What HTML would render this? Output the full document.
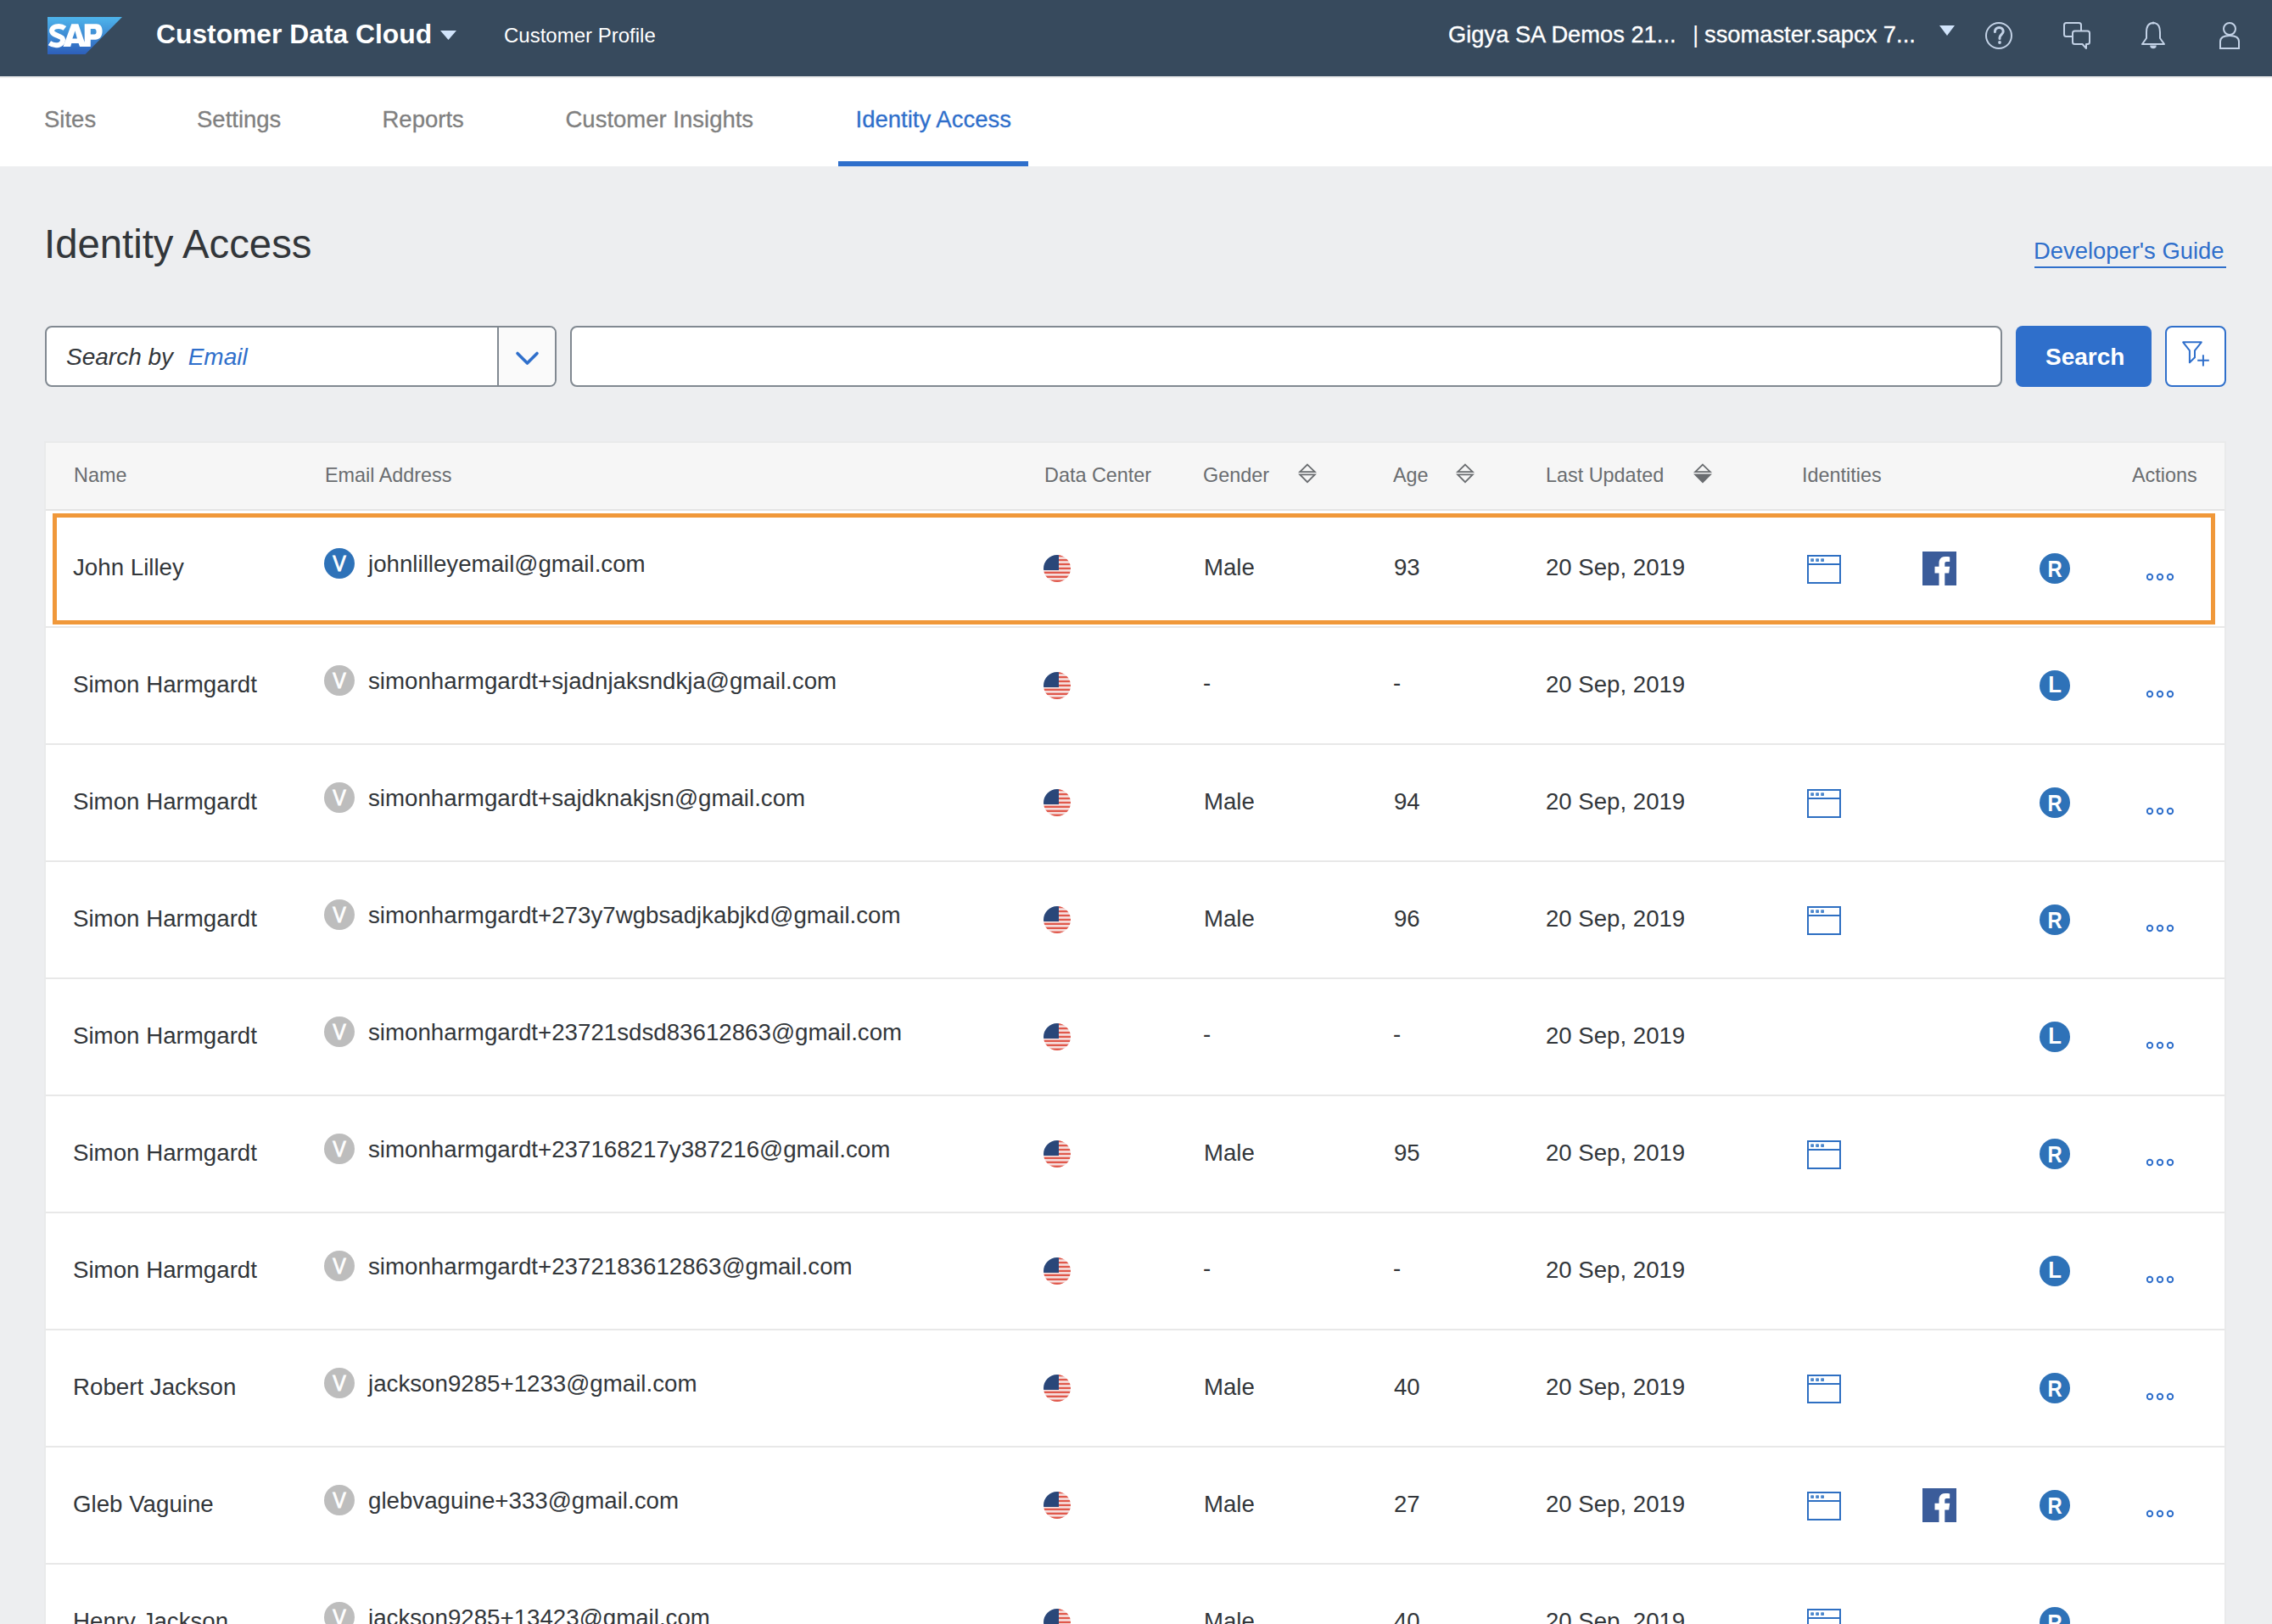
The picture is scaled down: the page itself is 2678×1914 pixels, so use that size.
<!DOCTYPE html>
<html><head><meta charset="utf-8">
<style>
*{box-sizing:border-box;margin:0;padding:0}
html,body{width:2678px;height:1914px;overflow:hidden;background:#edeef0;font-family:"Liberation Sans",sans-serif;color:#32363a}
.a{position:absolute;white-space:nowrap;line-height:1}
.tab{font-size:27.5px;color:#808080;top:126.5px;-webkit-text-stroke:0.3px currentColor}
.th{font-size:23.4px;color:#6a6d70;top:548.7px}
.td{font-size:27.6px;color:#32363a}
</style></head><body>

<div class="a" style="left:0;top:0;width:2678px;height:90px;background:#374a5d"></div>
<div class="a" style="left:0;top:90px;width:2678px;height:106px;background:#fff"></div>
<div class="a" style="left:0;top:91px;width:2678px;height:1px;background:#e8e8e8"></div>
<svg class="a" style="left:56px;top:20px" width="88" height="44" viewBox="0 0 88 44">
<defs><linearGradient id="lg" x1="0" y1="0" x2="0" y2="1"><stop offset="0" stop-color="#4eb5ec"/><stop offset="1" stop-color="#2d5fba"/></linearGradient></defs>
<polygon points="0,0 88,0 44.5,44 0,44" fill="url(#lg)"/>
<path transform="translate(-0.6,0.8)" d="M21 12.6 C17.5 10 13.5 9.8 10.5 10.6 C6.2 11.7 4.6 15 6.6 17.8 C8.6 20.4 14 21.3 17.3 23.6 C19.8 25.6 18.6 30.8 14 32 C10 33 6 32 3 30" fill="none" stroke="#fff" stroke-width="6"/>
<path fill="#fff" fill-rule="evenodd" d="M18.4 35 L28.3 8.2 L57.8 8.2 C62 8.2 64.6 11 64.6 16.6 C64.6 23.5 61 26.7 56.5 26.7 L50.8 26.7 L50.8 35 L38 35 L36.6 31.1 L28.3 31.1 L27.2 35 Z M29.4 25.4 L32.5 16.3 L34.9 25.4 Z M36.3 8.2 L43.7 8.2 L43.7 29.8 Z M50.8 13.9 L55.2 13.9 C56.8 13.9 57.6 15.2 57.6 17.2 C57.6 19.3 56.8 20.5 55.2 20.5 L50.8 20.5 Z"/>
</svg>
<div class="a" style="left:184px;top:25px;font-size:31.8px;font-weight:700;color:#fff">Customer Data Cloud</div>
<svg class="a" style="left:519px;top:36px" width="19" height="11"><polygon points="0,0 19,0 9.5,11" fill="#d1e4fb"/></svg>
<div class="a" style="left:594px;top:30px;font-size:24px;color:#fff">Customer Profile</div>
<div class="a" style="left:1707px;top:27px;font-size:27.3px;color:#fff;-webkit-text-stroke:0.35px #fff">Gigya SA Demos 21...</div>
<div class="a" style="left:1995px;top:27px;font-size:28px;color:#fff">|</div>
<div class="a" style="left:2009px;top:27px;font-size:27.3px;color:#fff;-webkit-text-stroke:0.35px #fff">ssomaster.sapcx 7...</div>
<svg class="a" style="left:2286px;top:30px" width="18" height="12"><polygon points="0,0 18,0 9,12" fill="#d1e4fb"/></svg>
<svg class="a" style="left:2338px;top:24px" width="36" height="36" viewBox="0 0 36 36"><circle cx="18" cy="18" r="15" fill="none" stroke="#c3d2e6" stroke-width="2"/><path d="M13.4 13.6 C13.4 10.4 15.6 8.4 18.4 8.4 C21.4 8.4 23.2 10.4 23.2 13 C23.2 16.4 19 17 19 20.6 V21.6" fill="none" stroke="#c3d2e6" stroke-width="3" stroke-linecap="round"/><circle cx="19" cy="26" r="1.9" fill="#c3d2e6"/></svg>
<svg class="a" style="left:2430px;top:24px" width="36" height="36" viewBox="0 0 36 36"><path d="M13 19 H5.5 Q3 19 3 16.5 V5.5 Q3 3 5.5 3 H20.5 Q23 3 23 5.5 V12.5" fill="none" stroke="#c3d2e6" stroke-width="2"/><path d="M15.5 12.5 H30.5 Q33 12.5 33 15 V25.5 Q33 28 30.5 28 H29 V33 L24.5 28 H15.5 Q13 28 13 25.5 V15 Q13 12.5 15.5 12.5 Z" fill="none" stroke="#c3d2e6" stroke-width="2" stroke-linejoin="round"/></svg>
<svg class="a" style="left:2520px;top:24px" width="36" height="36" viewBox="0 0 36 36"><path d="M18 3 C12 3 10 8 10 14 V21 L5 28 H31 L26 21 V14 C26 8 24 3 18 3 Z" fill="none" stroke="#c3d2e6" stroke-width="2" stroke-linejoin="round"/><path d="M14.2 29.5 A3.8 3.8 0 0 0 21.8 29.5 Z" fill="#c3d2e6"/><circle cx="18" cy="3" r="1.6" fill="#c3d2e6"/></svg>
<svg class="a" style="left:2610px;top:24px" width="36" height="36" viewBox="0 0 36 36"><circle cx="18" cy="10" r="7" fill="none" stroke="#c3d2e6" stroke-width="2"/><path d="M7 33 V25 C7 20 11 18 18 18 C25 18 29 20 29 25 V33 Z" fill="none" stroke="#c3d2e6" stroke-width="2"/></svg>
<div class="a tab" style="left:52px">Sites</div>
<div class="a tab" style="left:232px">Settings</div>
<div class="a tab" style="left:450.5px">Reports</div>
<div class="a tab" style="left:666.5px">Customer Insights</div>
<div class="a tab" style="left:1008.5px;color:#2f6fcb">Identity Access</div>
<div class="a" style="left:988px;top:190px;width:224px;height:6px;background:#2f6fcb"></div>
<div class="a" style="left:52px;top:263.8px;font-size:47.3px;color:#32363a">Identity Access</div>
<div class="a" style="left:2397px;top:281.5px;font-size:27.4px;color:#2f6fcb">Developer's Guide</div>
<div class="a" style="left:2398px;top:314px;width:226px;height:2px;background:#2f6fcb"></div>
<div class="a" style="left:53px;top:384px;width:603px;height:72px;background:#fff;border:2px solid #818991;border-radius:8px;overflow:hidden"><div class="a" style="left:531px;top:0;width:70px;height:68px;background:#fafafa;border-left:2px solid #818991"></div></div>
<svg class="a" style="left:604px;top:410px" width="34" height="24" viewBox="0 0 34 24"><polyline points="6,6.5 17.5,18 29,6.5" fill="none" stroke="#2f6fcb" stroke-width="3.6" stroke-linecap="round" stroke-linejoin="round"/></svg>
<div class="a" style="left:78px;top:407px;font-size:28px;font-style:italic;color:#32363a">Search by&nbsp;&nbsp;<span style="color:#2f6fcb;margin-left:2px">Email</span></div>
<div class="a" style="left:672px;top:384px;width:1688px;height:72px;background:#fff;border:2px solid #818991;border-radius:8px"></div>
<div class="a" style="left:2376px;top:384px;width:160px;height:72px;background:#2f6fcb;border-radius:8px"></div>
<div class="a" style="left:2411px;top:407px;font-size:28px;font-weight:700;color:#fff">Search</div>
<div class="a" style="left:2552px;top:384px;width:72px;height:72px;background:#fff;border:2px solid #2f6fcb;border-radius:8px"></div>
<svg class="a" style="left:2566px;top:396px" width="44" height="44" viewBox="0 0 44 44"><path d="M7.2 7.3 H28.8 L21 17.2 V25.3 L14.9 31.2 V17.2 Z" fill="none" stroke="#2f6fcb" stroke-width="2" stroke-linejoin="round"/><path d="M24.2 28.8 H37.8 M30.9 22.3 V35.6" stroke="#2f6fcb" stroke-width="2"/></svg>
<div class="a" style="left:52px;top:520px;width:2572px;height:1400px;background:#e9eaeb"></div>
<div class="a" style="left:54px;top:522px;width:2568px;height:1392px;background:#fff"></div>
<div class="a" style="left:54px;top:522px;width:2568px;height:78px;background:#f6f6f6"></div>
<div class="a" style="left:54px;top:600px;width:2568px;height:2px;background:#e4e4e4"></div>
<div class="a th" style="left:87px">Name</div>
<div class="a th" style="left:383px">Email Address</div>
<div class="a th" style="left:1231px">Data Center</div>
<div class="a th" style="left:1418px">Gender</div>
<div class="a th" style="left:1642px">Age</div>
<div class="a th" style="left:1822px">Last Updated</div>
<div class="a th" style="left:2124px">Identities</div>
<div class="a th" style="left:2513px">Actions</div>
<svg class="a" style="left:1530px;top:545px" width="22" height="26" viewBox="0 0 22 26"><polygon points="11,2.6 19.8,11.2 2.2,11.2" fill="none" stroke="#6a6d70" stroke-width="1.8" stroke-linejoin="miter"/><polygon points="2.2,14.4 19.8,14.4 11,23.2" fill="none" stroke="#6a6d70" stroke-width="1.8"/></svg>
<svg class="a" style="left:1716px;top:545px" width="22" height="26" viewBox="0 0 22 26"><polygon points="11,2.6 19.8,11.2 2.2,11.2" fill="none" stroke="#6a6d70" stroke-width="1.8" stroke-linejoin="miter"/><polygon points="2.2,14.4 19.8,14.4 11,23.2" fill="none" stroke="#6a6d70" stroke-width="1.8"/></svg>
<svg class="a" style="left:1996px;top:545px" width="22" height="26" viewBox="0 0 22 26"><polygon points="11,2.6 19.8,11.2 2.2,11.2" fill="none" stroke="#6a6d70" stroke-width="1.8" stroke-linejoin="miter"/><polygon points="2.2,14.4 19.8,14.4 11,23.2" fill="#6a6d70" stroke="#6a6d70" stroke-width="1.8"/></svg>
<div class="a" style="left:54px;top:738px;width:2568px;height:2px;background:#e8e8e8"></div>
<div class="a td" style="left:86px;top:655.3px;font-size:27.7px">John Lilley</div>
<svg class="a" style="left:382px;top:646px" width="36" height="36" viewBox="0 0 36 36"><circle cx="18" cy="18" r="18" fill="#2e72b8"/><text x="0" y="0" transform="translate(18,27.4) scale(0.93,1)" text-anchor="middle" font-family="Liberation Sans" font-weight="400" font-size="25" fill="#fff" stroke="#fff" stroke-width="0.9">V</text></svg>
<div class="a td" style="left:434px;top:651px;font-size:27.7px">johnlilleyemail@gmail.com</div>
<svg class="a" style="left:1230px;top:654px" width="32" height="32" viewBox="0 0 32 32"><defs><clipPath id="fc670"><circle cx="16" cy="16" r="16"/></clipPath><filter id="fb670" x="-10%" y="-10%" width="120%" height="120%"><feGaussianBlur stdDeviation="0.55"/></filter></defs><g clip-path="url(#fc670)"><g filter="url(#fb670)"><rect x="0" y="0.00" width="32" height="2.76" fill="#e0584c"/><rect x="0" y="2.46" width="32" height="2.76" fill="#f6e2e1"/><rect x="0" y="4.92" width="32" height="2.76" fill="#e0584c"/><rect x="0" y="7.38" width="32" height="2.76" fill="#f6e2e1"/><rect x="0" y="9.85" width="32" height="2.76" fill="#e0584c"/><rect x="0" y="12.31" width="32" height="2.76" fill="#f6e2e1"/><rect x="0" y="14.77" width="32" height="2.76" fill="#e0584c"/><rect x="0" y="17.23" width="32" height="2.76" fill="#f6e2e1"/><rect x="0" y="19.69" width="32" height="2.76" fill="#e0584c"/><rect x="0" y="22.15" width="32" height="2.76" fill="#f6e2e1"/><rect x="0" y="24.62" width="32" height="2.76" fill="#e0584c"/><rect x="0" y="27.08" width="32" height="2.76" fill="#f6e2e1"/><rect x="0" y="29.54" width="32" height="2.76" fill="#e0584c"/><rect x="-2" y="-2" width="20" height="20" fill="#2b4679"/></g></g></svg>
<div class="a td" style="left:1419px;top:655.3px">Male</div>
<div class="a td" style="left:1643px;top:655.3px">93</div>
<div class="a td" style="left:1822px;top:655.3px">20 Sep, 2019</div>
<svg class="a" style="left:2130px;top:654px" width="40" height="34" viewBox="0 0 40 34"><rect x="1" y="1" width="38" height="32" fill="none" stroke="#2e6fc2" stroke-width="2"/><rect x="1" y="10" width="38" height="2" fill="#2e6fc2"/><rect x="4.2" y="4.2" width="3.8" height="3.8" rx="0.8" fill="#4a86cc"/><rect x="10.2" y="4.2" width="3.8" height="3.8" rx="0.8" fill="#4a86cc"/><rect x="16.2" y="4.2" width="3.8" height="3.8" rx="0.8" fill="#4a86cc"/></svg>
<svg class="a" style="left:2266px;top:650px" width="40" height="40" viewBox="0 0 40 40"><rect width="40" height="40" fill="#3b5c9a"/><path d="M19.5 40 V25.5 H14.5 V17.8 H19.5 V13.5 C19.5 8.5 22.3 6 27 6 C29 6 31.3 6.2 32.2 6.4 V12 H28.5 C26.5 12 26.3 13 26.3 14.5 V17.8 H32.2 L31.2 25.5 H26.3 V40 Z" fill="#fff"/></svg>
<svg class="a" style="left:2404px;top:652px" width="36" height="36" viewBox="0 0 36 36"><circle cx="18" cy="18" r="18" fill="#2e72b8"/><text x="0" y="0" transform="translate(18,28) scale(0.88,1)" text-anchor="middle" font-family="Liberation Sans" font-weight="700" font-size="27" fill="#fff">R</text></svg>
<svg class="a" style="left:2530px;top:672px" width="34" height="16" viewBox="0 0 34 16"><circle cx="4" cy="8" r="3.2" fill="none" stroke="#2f6fcb" stroke-width="2"/><circle cx="16" cy="8" r="3.2" fill="none" stroke="#2f6fcb" stroke-width="2"/><circle cx="28" cy="8" r="3.2" fill="none" stroke="#2f6fcb" stroke-width="2"/></svg>
<div class="a" style="left:54px;top:876px;width:2568px;height:2px;background:#e8e8e8"></div>
<div class="a td" style="left:86px;top:793.3px;font-size:27.7px">Simon Harmgardt</div>
<svg class="a" style="left:382px;top:784px" width="36" height="36" viewBox="0 0 36 36"><circle cx="18" cy="18" r="18" fill="#bdbdbd"/><text x="0" y="0" transform="translate(18,27.4) scale(0.93,1)" text-anchor="middle" font-family="Liberation Sans" font-weight="400" font-size="25" fill="#fff" stroke="#fff" stroke-width="0.9">V</text></svg>
<div class="a td" style="left:434px;top:789px;font-size:27.7px">simonharmgardt+sjadnjaksndkja@gmail.com</div>
<svg class="a" style="left:1230px;top:792px" width="32" height="32" viewBox="0 0 32 32"><defs><clipPath id="fc808"><circle cx="16" cy="16" r="16"/></clipPath><filter id="fb808" x="-10%" y="-10%" width="120%" height="120%"><feGaussianBlur stdDeviation="0.55"/></filter></defs><g clip-path="url(#fc808)"><g filter="url(#fb808)"><rect x="0" y="0.00" width="32" height="2.76" fill="#e0584c"/><rect x="0" y="2.46" width="32" height="2.76" fill="#f6e2e1"/><rect x="0" y="4.92" width="32" height="2.76" fill="#e0584c"/><rect x="0" y="7.38" width="32" height="2.76" fill="#f6e2e1"/><rect x="0" y="9.85" width="32" height="2.76" fill="#e0584c"/><rect x="0" y="12.31" width="32" height="2.76" fill="#f6e2e1"/><rect x="0" y="14.77" width="32" height="2.76" fill="#e0584c"/><rect x="0" y="17.23" width="32" height="2.76" fill="#f6e2e1"/><rect x="0" y="19.69" width="32" height="2.76" fill="#e0584c"/><rect x="0" y="22.15" width="32" height="2.76" fill="#f6e2e1"/><rect x="0" y="24.62" width="32" height="2.76" fill="#e0584c"/><rect x="0" y="27.08" width="32" height="2.76" fill="#f6e2e1"/><rect x="0" y="29.54" width="32" height="2.76" fill="#e0584c"/><rect x="-2" y="-2" width="20" height="20" fill="#2b4679"/></g></g></svg>
<div class="a td" style="left:1418px;top:791.3px">-</div>
<div class="a td" style="left:1642px;top:791.3px">-</div>
<div class="a td" style="left:1822px;top:793.3px">20 Sep, 2019</div>
<svg class="a" style="left:2404px;top:790px" width="36" height="36" viewBox="0 0 36 36"><circle cx="18" cy="18" r="18" fill="#2e72b8"/><text x="0" y="0" transform="translate(18,26.3) scale(0.95,1)" text-anchor="middle" font-family="Liberation Sans" font-weight="700" font-size="27" fill="#fff">L</text></svg>
<svg class="a" style="left:2530px;top:810px" width="34" height="16" viewBox="0 0 34 16"><circle cx="4" cy="8" r="3.2" fill="none" stroke="#2f6fcb" stroke-width="2"/><circle cx="16" cy="8" r="3.2" fill="none" stroke="#2f6fcb" stroke-width="2"/><circle cx="28" cy="8" r="3.2" fill="none" stroke="#2f6fcb" stroke-width="2"/></svg>
<div class="a" style="left:54px;top:1014px;width:2568px;height:2px;background:#e8e8e8"></div>
<div class="a td" style="left:86px;top:931.3px;font-size:27.7px">Simon Harmgardt</div>
<svg class="a" style="left:382px;top:922px" width="36" height="36" viewBox="0 0 36 36"><circle cx="18" cy="18" r="18" fill="#bdbdbd"/><text x="0" y="0" transform="translate(18,27.4) scale(0.93,1)" text-anchor="middle" font-family="Liberation Sans" font-weight="400" font-size="25" fill="#fff" stroke="#fff" stroke-width="0.9">V</text></svg>
<div class="a td" style="left:434px;top:927px;font-size:27.7px">simonharmgardt+sajdknakjsn@gmail.com</div>
<svg class="a" style="left:1230px;top:930px" width="32" height="32" viewBox="0 0 32 32"><defs><clipPath id="fc946"><circle cx="16" cy="16" r="16"/></clipPath><filter id="fb946" x="-10%" y="-10%" width="120%" height="120%"><feGaussianBlur stdDeviation="0.55"/></filter></defs><g clip-path="url(#fc946)"><g filter="url(#fb946)"><rect x="0" y="0.00" width="32" height="2.76" fill="#e0584c"/><rect x="0" y="2.46" width="32" height="2.76" fill="#f6e2e1"/><rect x="0" y="4.92" width="32" height="2.76" fill="#e0584c"/><rect x="0" y="7.38" width="32" height="2.76" fill="#f6e2e1"/><rect x="0" y="9.85" width="32" height="2.76" fill="#e0584c"/><rect x="0" y="12.31" width="32" height="2.76" fill="#f6e2e1"/><rect x="0" y="14.77" width="32" height="2.76" fill="#e0584c"/><rect x="0" y="17.23" width="32" height="2.76" fill="#f6e2e1"/><rect x="0" y="19.69" width="32" height="2.76" fill="#e0584c"/><rect x="0" y="22.15" width="32" height="2.76" fill="#f6e2e1"/><rect x="0" y="24.62" width="32" height="2.76" fill="#e0584c"/><rect x="0" y="27.08" width="32" height="2.76" fill="#f6e2e1"/><rect x="0" y="29.54" width="32" height="2.76" fill="#e0584c"/><rect x="-2" y="-2" width="20" height="20" fill="#2b4679"/></g></g></svg>
<div class="a td" style="left:1419px;top:931.3px">Male</div>
<div class="a td" style="left:1643px;top:931.3px">94</div>
<div class="a td" style="left:1822px;top:931.3px">20 Sep, 2019</div>
<svg class="a" style="left:2130px;top:930px" width="40" height="34" viewBox="0 0 40 34"><rect x="1" y="1" width="38" height="32" fill="none" stroke="#2e6fc2" stroke-width="2"/><rect x="1" y="10" width="38" height="2" fill="#2e6fc2"/><rect x="4.2" y="4.2" width="3.8" height="3.8" rx="0.8" fill="#4a86cc"/><rect x="10.2" y="4.2" width="3.8" height="3.8" rx="0.8" fill="#4a86cc"/><rect x="16.2" y="4.2" width="3.8" height="3.8" rx="0.8" fill="#4a86cc"/></svg>
<svg class="a" style="left:2404px;top:928px" width="36" height="36" viewBox="0 0 36 36"><circle cx="18" cy="18" r="18" fill="#2e72b8"/><text x="0" y="0" transform="translate(18,28) scale(0.88,1)" text-anchor="middle" font-family="Liberation Sans" font-weight="700" font-size="27" fill="#fff">R</text></svg>
<svg class="a" style="left:2530px;top:948px" width="34" height="16" viewBox="0 0 34 16"><circle cx="4" cy="8" r="3.2" fill="none" stroke="#2f6fcb" stroke-width="2"/><circle cx="16" cy="8" r="3.2" fill="none" stroke="#2f6fcb" stroke-width="2"/><circle cx="28" cy="8" r="3.2" fill="none" stroke="#2f6fcb" stroke-width="2"/></svg>
<div class="a" style="left:54px;top:1152px;width:2568px;height:2px;background:#e8e8e8"></div>
<div class="a td" style="left:86px;top:1069.3px;font-size:27.7px">Simon Harmgardt</div>
<svg class="a" style="left:382px;top:1060px" width="36" height="36" viewBox="0 0 36 36"><circle cx="18" cy="18" r="18" fill="#bdbdbd"/><text x="0" y="0" transform="translate(18,27.4) scale(0.93,1)" text-anchor="middle" font-family="Liberation Sans" font-weight="400" font-size="25" fill="#fff" stroke="#fff" stroke-width="0.9">V</text></svg>
<div class="a td" style="left:434px;top:1065px;font-size:27.7px">simonharmgardt+273y7wgbsadjkabjkd@gmail.com</div>
<svg class="a" style="left:1230px;top:1068px" width="32" height="32" viewBox="0 0 32 32"><defs><clipPath id="fc1084"><circle cx="16" cy="16" r="16"/></clipPath><filter id="fb1084" x="-10%" y="-10%" width="120%" height="120%"><feGaussianBlur stdDeviation="0.55"/></filter></defs><g clip-path="url(#fc1084)"><g filter="url(#fb1084)"><rect x="0" y="0.00" width="32" height="2.76" fill="#e0584c"/><rect x="0" y="2.46" width="32" height="2.76" fill="#f6e2e1"/><rect x="0" y="4.92" width="32" height="2.76" fill="#e0584c"/><rect x="0" y="7.38" width="32" height="2.76" fill="#f6e2e1"/><rect x="0" y="9.85" width="32" height="2.76" fill="#e0584c"/><rect x="0" y="12.31" width="32" height="2.76" fill="#f6e2e1"/><rect x="0" y="14.77" width="32" height="2.76" fill="#e0584c"/><rect x="0" y="17.23" width="32" height="2.76" fill="#f6e2e1"/><rect x="0" y="19.69" width="32" height="2.76" fill="#e0584c"/><rect x="0" y="22.15" width="32" height="2.76" fill="#f6e2e1"/><rect x="0" y="24.62" width="32" height="2.76" fill="#e0584c"/><rect x="0" y="27.08" width="32" height="2.76" fill="#f6e2e1"/><rect x="0" y="29.54" width="32" height="2.76" fill="#e0584c"/><rect x="-2" y="-2" width="20" height="20" fill="#2b4679"/></g></g></svg>
<div class="a td" style="left:1419px;top:1069.3px">Male</div>
<div class="a td" style="left:1643px;top:1069.3px">96</div>
<div class="a td" style="left:1822px;top:1069.3px">20 Sep, 2019</div>
<svg class="a" style="left:2130px;top:1068px" width="40" height="34" viewBox="0 0 40 34"><rect x="1" y="1" width="38" height="32" fill="none" stroke="#2e6fc2" stroke-width="2"/><rect x="1" y="10" width="38" height="2" fill="#2e6fc2"/><rect x="4.2" y="4.2" width="3.8" height="3.8" rx="0.8" fill="#4a86cc"/><rect x="10.2" y="4.2" width="3.8" height="3.8" rx="0.8" fill="#4a86cc"/><rect x="16.2" y="4.2" width="3.8" height="3.8" rx="0.8" fill="#4a86cc"/></svg>
<svg class="a" style="left:2404px;top:1066px" width="36" height="36" viewBox="0 0 36 36"><circle cx="18" cy="18" r="18" fill="#2e72b8"/><text x="0" y="0" transform="translate(18,28) scale(0.88,1)" text-anchor="middle" font-family="Liberation Sans" font-weight="700" font-size="27" fill="#fff">R</text></svg>
<svg class="a" style="left:2530px;top:1086px" width="34" height="16" viewBox="0 0 34 16"><circle cx="4" cy="8" r="3.2" fill="none" stroke="#2f6fcb" stroke-width="2"/><circle cx="16" cy="8" r="3.2" fill="none" stroke="#2f6fcb" stroke-width="2"/><circle cx="28" cy="8" r="3.2" fill="none" stroke="#2f6fcb" stroke-width="2"/></svg>
<div class="a" style="left:54px;top:1290px;width:2568px;height:2px;background:#e8e8e8"></div>
<div class="a td" style="left:86px;top:1207.3px;font-size:27.7px">Simon Harmgardt</div>
<svg class="a" style="left:382px;top:1198px" width="36" height="36" viewBox="0 0 36 36"><circle cx="18" cy="18" r="18" fill="#bdbdbd"/><text x="0" y="0" transform="translate(18,27.4) scale(0.93,1)" text-anchor="middle" font-family="Liberation Sans" font-weight="400" font-size="25" fill="#fff" stroke="#fff" stroke-width="0.9">V</text></svg>
<div class="a td" style="left:434px;top:1203px;font-size:27.7px">simonharmgardt+23721sdsd83612863@gmail.com</div>
<svg class="a" style="left:1230px;top:1206px" width="32" height="32" viewBox="0 0 32 32"><defs><clipPath id="fc1222"><circle cx="16" cy="16" r="16"/></clipPath><filter id="fb1222" x="-10%" y="-10%" width="120%" height="120%"><feGaussianBlur stdDeviation="0.55"/></filter></defs><g clip-path="url(#fc1222)"><g filter="url(#fb1222)"><rect x="0" y="0.00" width="32" height="2.76" fill="#e0584c"/><rect x="0" y="2.46" width="32" height="2.76" fill="#f6e2e1"/><rect x="0" y="4.92" width="32" height="2.76" fill="#e0584c"/><rect x="0" y="7.38" width="32" height="2.76" fill="#f6e2e1"/><rect x="0" y="9.85" width="32" height="2.76" fill="#e0584c"/><rect x="0" y="12.31" width="32" height="2.76" fill="#f6e2e1"/><rect x="0" y="14.77" width="32" height="2.76" fill="#e0584c"/><rect x="0" y="17.23" width="32" height="2.76" fill="#f6e2e1"/><rect x="0" y="19.69" width="32" height="2.76" fill="#e0584c"/><rect x="0" y="22.15" width="32" height="2.76" fill="#f6e2e1"/><rect x="0" y="24.62" width="32" height="2.76" fill="#e0584c"/><rect x="0" y="27.08" width="32" height="2.76" fill="#f6e2e1"/><rect x="0" y="29.54" width="32" height="2.76" fill="#e0584c"/><rect x="-2" y="-2" width="20" height="20" fill="#2b4679"/></g></g></svg>
<div class="a td" style="left:1418px;top:1205.3px">-</div>
<div class="a td" style="left:1642px;top:1205.3px">-</div>
<div class="a td" style="left:1822px;top:1207.3px">20 Sep, 2019</div>
<svg class="a" style="left:2404px;top:1204px" width="36" height="36" viewBox="0 0 36 36"><circle cx="18" cy="18" r="18" fill="#2e72b8"/><text x="0" y="0" transform="translate(18,26.3) scale(0.95,1)" text-anchor="middle" font-family="Liberation Sans" font-weight="700" font-size="27" fill="#fff">L</text></svg>
<svg class="a" style="left:2530px;top:1224px" width="34" height="16" viewBox="0 0 34 16"><circle cx="4" cy="8" r="3.2" fill="none" stroke="#2f6fcb" stroke-width="2"/><circle cx="16" cy="8" r="3.2" fill="none" stroke="#2f6fcb" stroke-width="2"/><circle cx="28" cy="8" r="3.2" fill="none" stroke="#2f6fcb" stroke-width="2"/></svg>
<div class="a" style="left:54px;top:1428px;width:2568px;height:2px;background:#e8e8e8"></div>
<div class="a td" style="left:86px;top:1345.3px;font-size:27.7px">Simon Harmgardt</div>
<svg class="a" style="left:382px;top:1336px" width="36" height="36" viewBox="0 0 36 36"><circle cx="18" cy="18" r="18" fill="#bdbdbd"/><text x="0" y="0" transform="translate(18,27.4) scale(0.93,1)" text-anchor="middle" font-family="Liberation Sans" font-weight="400" font-size="25" fill="#fff" stroke="#fff" stroke-width="0.9">V</text></svg>
<div class="a td" style="left:434px;top:1341px;font-size:27.7px">simonharmgardt+237168217y387216@gmail.com</div>
<svg class="a" style="left:1230px;top:1344px" width="32" height="32" viewBox="0 0 32 32"><defs><clipPath id="fc1360"><circle cx="16" cy="16" r="16"/></clipPath><filter id="fb1360" x="-10%" y="-10%" width="120%" height="120%"><feGaussianBlur stdDeviation="0.55"/></filter></defs><g clip-path="url(#fc1360)"><g filter="url(#fb1360)"><rect x="0" y="0.00" width="32" height="2.76" fill="#e0584c"/><rect x="0" y="2.46" width="32" height="2.76" fill="#f6e2e1"/><rect x="0" y="4.92" width="32" height="2.76" fill="#e0584c"/><rect x="0" y="7.38" width="32" height="2.76" fill="#f6e2e1"/><rect x="0" y="9.85" width="32" height="2.76" fill="#e0584c"/><rect x="0" y="12.31" width="32" height="2.76" fill="#f6e2e1"/><rect x="0" y="14.77" width="32" height="2.76" fill="#e0584c"/><rect x="0" y="17.23" width="32" height="2.76" fill="#f6e2e1"/><rect x="0" y="19.69" width="32" height="2.76" fill="#e0584c"/><rect x="0" y="22.15" width="32" height="2.76" fill="#f6e2e1"/><rect x="0" y="24.62" width="32" height="2.76" fill="#e0584c"/><rect x="0" y="27.08" width="32" height="2.76" fill="#f6e2e1"/><rect x="0" y="29.54" width="32" height="2.76" fill="#e0584c"/><rect x="-2" y="-2" width="20" height="20" fill="#2b4679"/></g></g></svg>
<div class="a td" style="left:1419px;top:1345.3px">Male</div>
<div class="a td" style="left:1643px;top:1345.3px">95</div>
<div class="a td" style="left:1822px;top:1345.3px">20 Sep, 2019</div>
<svg class="a" style="left:2130px;top:1344px" width="40" height="34" viewBox="0 0 40 34"><rect x="1" y="1" width="38" height="32" fill="none" stroke="#2e6fc2" stroke-width="2"/><rect x="1" y="10" width="38" height="2" fill="#2e6fc2"/><rect x="4.2" y="4.2" width="3.8" height="3.8" rx="0.8" fill="#4a86cc"/><rect x="10.2" y="4.2" width="3.8" height="3.8" rx="0.8" fill="#4a86cc"/><rect x="16.2" y="4.2" width="3.8" height="3.8" rx="0.8" fill="#4a86cc"/></svg>
<svg class="a" style="left:2404px;top:1342px" width="36" height="36" viewBox="0 0 36 36"><circle cx="18" cy="18" r="18" fill="#2e72b8"/><text x="0" y="0" transform="translate(18,28) scale(0.88,1)" text-anchor="middle" font-family="Liberation Sans" font-weight="700" font-size="27" fill="#fff">R</text></svg>
<svg class="a" style="left:2530px;top:1362px" width="34" height="16" viewBox="0 0 34 16"><circle cx="4" cy="8" r="3.2" fill="none" stroke="#2f6fcb" stroke-width="2"/><circle cx="16" cy="8" r="3.2" fill="none" stroke="#2f6fcb" stroke-width="2"/><circle cx="28" cy="8" r="3.2" fill="none" stroke="#2f6fcb" stroke-width="2"/></svg>
<div class="a" style="left:54px;top:1566px;width:2568px;height:2px;background:#e8e8e8"></div>
<div class="a td" style="left:86px;top:1483.3px;font-size:27.7px">Simon Harmgardt</div>
<svg class="a" style="left:382px;top:1474px" width="36" height="36" viewBox="0 0 36 36"><circle cx="18" cy="18" r="18" fill="#bdbdbd"/><text x="0" y="0" transform="translate(18,27.4) scale(0.93,1)" text-anchor="middle" font-family="Liberation Sans" font-weight="400" font-size="25" fill="#fff" stroke="#fff" stroke-width="0.9">V</text></svg>
<div class="a td" style="left:434px;top:1479px;font-size:27.7px">simonharmgardt+2372183612863@gmail.com</div>
<svg class="a" style="left:1230px;top:1482px" width="32" height="32" viewBox="0 0 32 32"><defs><clipPath id="fc1498"><circle cx="16" cy="16" r="16"/></clipPath><filter id="fb1498" x="-10%" y="-10%" width="120%" height="120%"><feGaussianBlur stdDeviation="0.55"/></filter></defs><g clip-path="url(#fc1498)"><g filter="url(#fb1498)"><rect x="0" y="0.00" width="32" height="2.76" fill="#e0584c"/><rect x="0" y="2.46" width="32" height="2.76" fill="#f6e2e1"/><rect x="0" y="4.92" width="32" height="2.76" fill="#e0584c"/><rect x="0" y="7.38" width="32" height="2.76" fill="#f6e2e1"/><rect x="0" y="9.85" width="32" height="2.76" fill="#e0584c"/><rect x="0" y="12.31" width="32" height="2.76" fill="#f6e2e1"/><rect x="0" y="14.77" width="32" height="2.76" fill="#e0584c"/><rect x="0" y="17.23" width="32" height="2.76" fill="#f6e2e1"/><rect x="0" y="19.69" width="32" height="2.76" fill="#e0584c"/><rect x="0" y="22.15" width="32" height="2.76" fill="#f6e2e1"/><rect x="0" y="24.62" width="32" height="2.76" fill="#e0584c"/><rect x="0" y="27.08" width="32" height="2.76" fill="#f6e2e1"/><rect x="0" y="29.54" width="32" height="2.76" fill="#e0584c"/><rect x="-2" y="-2" width="20" height="20" fill="#2b4679"/></g></g></svg>
<div class="a td" style="left:1418px;top:1481.3px">-</div>
<div class="a td" style="left:1642px;top:1481.3px">-</div>
<div class="a td" style="left:1822px;top:1483.3px">20 Sep, 2019</div>
<svg class="a" style="left:2404px;top:1480px" width="36" height="36" viewBox="0 0 36 36"><circle cx="18" cy="18" r="18" fill="#2e72b8"/><text x="0" y="0" transform="translate(18,26.3) scale(0.95,1)" text-anchor="middle" font-family="Liberation Sans" font-weight="700" font-size="27" fill="#fff">L</text></svg>
<svg class="a" style="left:2530px;top:1500px" width="34" height="16" viewBox="0 0 34 16"><circle cx="4" cy="8" r="3.2" fill="none" stroke="#2f6fcb" stroke-width="2"/><circle cx="16" cy="8" r="3.2" fill="none" stroke="#2f6fcb" stroke-width="2"/><circle cx="28" cy="8" r="3.2" fill="none" stroke="#2f6fcb" stroke-width="2"/></svg>
<div class="a" style="left:54px;top:1704px;width:2568px;height:2px;background:#e8e8e8"></div>
<div class="a td" style="left:86px;top:1621.3px;font-size:27.7px">Robert Jackson</div>
<svg class="a" style="left:382px;top:1612px" width="36" height="36" viewBox="0 0 36 36"><circle cx="18" cy="18" r="18" fill="#bdbdbd"/><text x="0" y="0" transform="translate(18,27.4) scale(0.93,1)" text-anchor="middle" font-family="Liberation Sans" font-weight="400" font-size="25" fill="#fff" stroke="#fff" stroke-width="0.9">V</text></svg>
<div class="a td" style="left:434px;top:1617px;font-size:27.7px">jackson9285+1233@gmail.com</div>
<svg class="a" style="left:1230px;top:1620px" width="32" height="32" viewBox="0 0 32 32"><defs><clipPath id="fc1636"><circle cx="16" cy="16" r="16"/></clipPath><filter id="fb1636" x="-10%" y="-10%" width="120%" height="120%"><feGaussianBlur stdDeviation="0.55"/></filter></defs><g clip-path="url(#fc1636)"><g filter="url(#fb1636)"><rect x="0" y="0.00" width="32" height="2.76" fill="#e0584c"/><rect x="0" y="2.46" width="32" height="2.76" fill="#f6e2e1"/><rect x="0" y="4.92" width="32" height="2.76" fill="#e0584c"/><rect x="0" y="7.38" width="32" height="2.76" fill="#f6e2e1"/><rect x="0" y="9.85" width="32" height="2.76" fill="#e0584c"/><rect x="0" y="12.31" width="32" height="2.76" fill="#f6e2e1"/><rect x="0" y="14.77" width="32" height="2.76" fill="#e0584c"/><rect x="0" y="17.23" width="32" height="2.76" fill="#f6e2e1"/><rect x="0" y="19.69" width="32" height="2.76" fill="#e0584c"/><rect x="0" y="22.15" width="32" height="2.76" fill="#f6e2e1"/><rect x="0" y="24.62" width="32" height="2.76" fill="#e0584c"/><rect x="0" y="27.08" width="32" height="2.76" fill="#f6e2e1"/><rect x="0" y="29.54" width="32" height="2.76" fill="#e0584c"/><rect x="-2" y="-2" width="20" height="20" fill="#2b4679"/></g></g></svg>
<div class="a td" style="left:1419px;top:1621.3px">Male</div>
<div class="a td" style="left:1643px;top:1621.3px">40</div>
<div class="a td" style="left:1822px;top:1621.3px">20 Sep, 2019</div>
<svg class="a" style="left:2130px;top:1620px" width="40" height="34" viewBox="0 0 40 34"><rect x="1" y="1" width="38" height="32" fill="none" stroke="#2e6fc2" stroke-width="2"/><rect x="1" y="10" width="38" height="2" fill="#2e6fc2"/><rect x="4.2" y="4.2" width="3.8" height="3.8" rx="0.8" fill="#4a86cc"/><rect x="10.2" y="4.2" width="3.8" height="3.8" rx="0.8" fill="#4a86cc"/><rect x="16.2" y="4.2" width="3.8" height="3.8" rx="0.8" fill="#4a86cc"/></svg>
<svg class="a" style="left:2404px;top:1618px" width="36" height="36" viewBox="0 0 36 36"><circle cx="18" cy="18" r="18" fill="#2e72b8"/><text x="0" y="0" transform="translate(18,28) scale(0.88,1)" text-anchor="middle" font-family="Liberation Sans" font-weight="700" font-size="27" fill="#fff">R</text></svg>
<svg class="a" style="left:2530px;top:1638px" width="34" height="16" viewBox="0 0 34 16"><circle cx="4" cy="8" r="3.2" fill="none" stroke="#2f6fcb" stroke-width="2"/><circle cx="16" cy="8" r="3.2" fill="none" stroke="#2f6fcb" stroke-width="2"/><circle cx="28" cy="8" r="3.2" fill="none" stroke="#2f6fcb" stroke-width="2"/></svg>
<div class="a" style="left:54px;top:1842px;width:2568px;height:2px;background:#e8e8e8"></div>
<div class="a td" style="left:86px;top:1759.3px;font-size:27.7px">Gleb Vaguine</div>
<svg class="a" style="left:382px;top:1750px" width="36" height="36" viewBox="0 0 36 36"><circle cx="18" cy="18" r="18" fill="#bdbdbd"/><text x="0" y="0" transform="translate(18,27.4) scale(0.93,1)" text-anchor="middle" font-family="Liberation Sans" font-weight="400" font-size="25" fill="#fff" stroke="#fff" stroke-width="0.9">V</text></svg>
<div class="a td" style="left:434px;top:1755px;font-size:27.7px">glebvaguine+333@gmail.com</div>
<svg class="a" style="left:1230px;top:1758px" width="32" height="32" viewBox="0 0 32 32"><defs><clipPath id="fc1774"><circle cx="16" cy="16" r="16"/></clipPath><filter id="fb1774" x="-10%" y="-10%" width="120%" height="120%"><feGaussianBlur stdDeviation="0.55"/></filter></defs><g clip-path="url(#fc1774)"><g filter="url(#fb1774)"><rect x="0" y="0.00" width="32" height="2.76" fill="#e0584c"/><rect x="0" y="2.46" width="32" height="2.76" fill="#f6e2e1"/><rect x="0" y="4.92" width="32" height="2.76" fill="#e0584c"/><rect x="0" y="7.38" width="32" height="2.76" fill="#f6e2e1"/><rect x="0" y="9.85" width="32" height="2.76" fill="#e0584c"/><rect x="0" y="12.31" width="32" height="2.76" fill="#f6e2e1"/><rect x="0" y="14.77" width="32" height="2.76" fill="#e0584c"/><rect x="0" y="17.23" width="32" height="2.76" fill="#f6e2e1"/><rect x="0" y="19.69" width="32" height="2.76" fill="#e0584c"/><rect x="0" y="22.15" width="32" height="2.76" fill="#f6e2e1"/><rect x="0" y="24.62" width="32" height="2.76" fill="#e0584c"/><rect x="0" y="27.08" width="32" height="2.76" fill="#f6e2e1"/><rect x="0" y="29.54" width="32" height="2.76" fill="#e0584c"/><rect x="-2" y="-2" width="20" height="20" fill="#2b4679"/></g></g></svg>
<div class="a td" style="left:1419px;top:1759.3px">Male</div>
<div class="a td" style="left:1643px;top:1759.3px">27</div>
<div class="a td" style="left:1822px;top:1759.3px">20 Sep, 2019</div>
<svg class="a" style="left:2130px;top:1758px" width="40" height="34" viewBox="0 0 40 34"><rect x="1" y="1" width="38" height="32" fill="none" stroke="#2e6fc2" stroke-width="2"/><rect x="1" y="10" width="38" height="2" fill="#2e6fc2"/><rect x="4.2" y="4.2" width="3.8" height="3.8" rx="0.8" fill="#4a86cc"/><rect x="10.2" y="4.2" width="3.8" height="3.8" rx="0.8" fill="#4a86cc"/><rect x="16.2" y="4.2" width="3.8" height="3.8" rx="0.8" fill="#4a86cc"/></svg>
<svg class="a" style="left:2266px;top:1754px" width="40" height="40" viewBox="0 0 40 40"><rect width="40" height="40" fill="#3b5c9a"/><path d="M19.5 40 V25.5 H14.5 V17.8 H19.5 V13.5 C19.5 8.5 22.3 6 27 6 C29 6 31.3 6.2 32.2 6.4 V12 H28.5 C26.5 12 26.3 13 26.3 14.5 V17.8 H32.2 L31.2 25.5 H26.3 V40 Z" fill="#fff"/></svg>
<svg class="a" style="left:2404px;top:1756px" width="36" height="36" viewBox="0 0 36 36"><circle cx="18" cy="18" r="18" fill="#2e72b8"/><text x="0" y="0" transform="translate(18,28) scale(0.88,1)" text-anchor="middle" font-family="Liberation Sans" font-weight="700" font-size="27" fill="#fff">R</text></svg>
<svg class="a" style="left:2530px;top:1776px" width="34" height="16" viewBox="0 0 34 16"><circle cx="4" cy="8" r="3.2" fill="none" stroke="#2f6fcb" stroke-width="2"/><circle cx="16" cy="8" r="3.2" fill="none" stroke="#2f6fcb" stroke-width="2"/><circle cx="28" cy="8" r="3.2" fill="none" stroke="#2f6fcb" stroke-width="2"/></svg>
<div class="a" style="left:54px;top:1980px;width:2568px;height:2px;background:#e8e8e8"></div>
<div class="a td" style="left:86px;top:1897.3px;font-size:27.7px">Henry Jackson</div>
<svg class="a" style="left:382px;top:1888px" width="36" height="36" viewBox="0 0 36 36"><circle cx="18" cy="18" r="18" fill="#bdbdbd"/><text x="0" y="0" transform="translate(18,27.4) scale(0.93,1)" text-anchor="middle" font-family="Liberation Sans" font-weight="400" font-size="25" fill="#fff" stroke="#fff" stroke-width="0.9">V</text></svg>
<div class="a td" style="left:434px;top:1893px;font-size:27.7px">jackson9285+13423@gmail.com</div>
<svg class="a" style="left:1230px;top:1896px" width="32" height="32" viewBox="0 0 32 32"><defs><clipPath id="fc1912"><circle cx="16" cy="16" r="16"/></clipPath><filter id="fb1912" x="-10%" y="-10%" width="120%" height="120%"><feGaussianBlur stdDeviation="0.55"/></filter></defs><g clip-path="url(#fc1912)"><g filter="url(#fb1912)"><rect x="0" y="0.00" width="32" height="2.76" fill="#e0584c"/><rect x="0" y="2.46" width="32" height="2.76" fill="#f6e2e1"/><rect x="0" y="4.92" width="32" height="2.76" fill="#e0584c"/><rect x="0" y="7.38" width="32" height="2.76" fill="#f6e2e1"/><rect x="0" y="9.85" width="32" height="2.76" fill="#e0584c"/><rect x="0" y="12.31" width="32" height="2.76" fill="#f6e2e1"/><rect x="0" y="14.77" width="32" height="2.76" fill="#e0584c"/><rect x="0" y="17.23" width="32" height="2.76" fill="#f6e2e1"/><rect x="0" y="19.69" width="32" height="2.76" fill="#e0584c"/><rect x="0" y="22.15" width="32" height="2.76" fill="#f6e2e1"/><rect x="0" y="24.62" width="32" height="2.76" fill="#e0584c"/><rect x="0" y="27.08" width="32" height="2.76" fill="#f6e2e1"/><rect x="0" y="29.54" width="32" height="2.76" fill="#e0584c"/><rect x="-2" y="-2" width="20" height="20" fill="#2b4679"/></g></g></svg>
<div class="a td" style="left:1419px;top:1897.3px">Male</div>
<div class="a td" style="left:1643px;top:1897.3px">40</div>
<div class="a td" style="left:1822px;top:1897.3px">20 Sep, 2019</div>
<svg class="a" style="left:2130px;top:1896px" width="40" height="34" viewBox="0 0 40 34"><rect x="1" y="1" width="38" height="32" fill="none" stroke="#2e6fc2" stroke-width="2"/><rect x="1" y="10" width="38" height="2" fill="#2e6fc2"/><rect x="4.2" y="4.2" width="3.8" height="3.8" rx="0.8" fill="#4a86cc"/><rect x="10.2" y="4.2" width="3.8" height="3.8" rx="0.8" fill="#4a86cc"/><rect x="16.2" y="4.2" width="3.8" height="3.8" rx="0.8" fill="#4a86cc"/></svg>
<svg class="a" style="left:2404px;top:1894px" width="36" height="36" viewBox="0 0 36 36"><circle cx="18" cy="18" r="18" fill="#2e72b8"/><text x="0" y="0" transform="translate(18,28) scale(0.88,1)" text-anchor="middle" font-family="Liberation Sans" font-weight="700" font-size="27" fill="#fff">R</text></svg>
<svg class="a" style="left:2530px;top:1914px" width="34" height="16" viewBox="0 0 34 16"><circle cx="4" cy="8" r="3.2" fill="none" stroke="#2f6fcb" stroke-width="2"/><circle cx="16" cy="8" r="3.2" fill="none" stroke="#2f6fcb" stroke-width="2"/><circle cx="28" cy="8" r="3.2" fill="none" stroke="#2f6fcb" stroke-width="2"/></svg>
<div class="a" style="left:62px;top:605px;width:2549px;height:131px;border:5px solid #f0983a"></div>
</body></html>
